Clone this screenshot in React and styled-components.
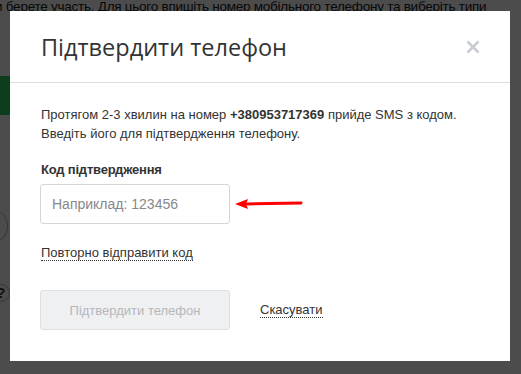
import React from "react";
import styled, { createGlobalStyle } from "styled-components";

const Global = createGlobalStyle`
  html, body { margin: 0; padding: 0; }
  body { width: 521px; height: 374px; overflow: hidden; font-family: "Liberation Sans", Arial, sans-serif; background: #fff; }
`;

const Page = styled.div`
  position: relative;
  width: 521px;
  height: 374px;
  overflow: hidden;
  background: #fff;
`;

const BgText = styled.div`
  font-size: 13.5px;
  line-height: 14px;
  letter-spacing: -0.25px;
  color: #1a1a1a;
  white-space: nowrap;
  margin-left: -5px;
`;

const BgGreen = styled.div`
  margin-top: 62px;
  width: 60px;
  height: 39px;
  background: #2fcb64;
`;

const BgCircle = styled.div`
  margin: 95px 0 0 -18px;
  width: 24px;
  height: 30px;
  border-radius: 50%;
  border: 1px solid #bbb;
`;

const BgHelp = styled.div`
  margin: 42px 0 0 -8px;
  width: 16px;
  height: 16px;
  border-radius: 50%;
  border: 1px solid #bbb;
  font-size: 14px;
  font-weight: bold;
  line-height: 16px;
  text-align: center;
  color: #333;
`;

const Overlay = styled.div`
  position: absolute;
  inset: 0;
  background: rgba(0, 0, 0, 0.7);
`;

const Modal = styled.div`
  position: absolute;
  left: 10px;
  top: 11px;
  width: 500px;
  height: 350px;
  background: #fff;
  display: flex;
  flex-direction: column;
`;

const Header = styled.div`
  height: 71px;
  border-bottom: 1px solid #dcdce2;
  display: flex;
  align-items: center;
  justify-content: space-between;
  padding: 0 30px 0 31px;
`;

const Title = styled.h2`
  margin: 0;
  font-family: "Open Sans", "Liberation Sans", sans-serif;
  font-weight: 400;
  font-size: 23.5px;
  color: #333;
`;

const Close = styled.button`
  border: 0;
  background: none;
  padding: 0;
  width: 14px;
  height: 14px;
  display: flex;
  cursor: pointer;
`;

const Body = styled.div`
  padding: 22px 30px 0 31px;
  color: #333;
  font-size: 13px;
`;

const Text = styled.p`
  margin: 0;
  line-height: 19px;
  color: #333;
`;

const Label = styled.div`
  margin-top: 18px;
  font-weight: bold;
  font-size: 13px;
  line-height: 18px;
  letter-spacing: -0.2px;
`;

const FieldRow = styled.div`
  margin-top: 5px;
  margin-left: -1px;
  display: flex;
  align-items: center;
  gap: 5px;
`;

const Input = styled.input`
  box-sizing: border-box;
  width: 190px;
  height: 40px;
  border: 1px solid #d4d4dc;
  border-radius: 3px;
  padding: 0 11px;
  font-family: "Liberation Sans", Arial, sans-serif;
  font-size: 14px;
  color: #333;
  outline: none;
  &::placeholder { color: #888; }
`;

const DotLink = styled.a`
  color: #333;
  text-decoration: none;
  border-bottom: 1px dotted #333;
  font-size: 13px;
  line-height: 15px;
  cursor: pointer;
`;

const ResendRow = styled.div`
  margin-top: 21px;
`;

const Actions = styled.div`
  margin-top: 30px;
  margin-left: -1px;
  display: flex;
  align-items: center;
  gap: 30px;
`;

const Button = styled.button`
  box-sizing: border-box;
  width: 190px;
  height: 40px;
  background: #eef0f2;
  border: 1px solid #dedfe3;
  border-radius: 3px;
  color: #b5b7bb;
  font-family: "Liberation Sans", Arial, sans-serif;
  font-size: 13px;
`;

export default function App() {
  return (
    <>
      <Global />
      <Page>
        <BgText>и берете участь. Для цього впишіть номер мобільного телефону та виберіть типи</BgText>
        <BgGreen />
        <BgCircle />
        <BgHelp>?</BgHelp>
        <Overlay />
        <Modal>
          <Header>
            <Title>Підтвердити телефон</Title>
            <Close aria-label="close">
              <svg width="14" height="14" viewBox="0 0 14 14">
                <path d="M1.5 1.5 L12.5 12.5 M12.5 1.5 L1.5 12.5" stroke="#c9ccd4" strokeWidth="2.6" />
              </svg>
            </Close>
          </Header>
          <Body>
            <Text>
              Протягом 2-3 хвилин на номер <b>+380953717369</b> прийде SMS з кодом.
              <br />
              Введіть його для підтвердження телефону.
            </Text>
            <Label>Код підтвердження</Label>
            <FieldRow>
              <Input placeholder="Наприклад: 123456" />
              <svg width="70" height="12" viewBox="0 0 70 12">
                <path d="M12 6 L66 5" stroke="#f00" strokeWidth="3" strokeLinecap="round" />
                <path d="M0 6 L13 1 L11 6 L13 11 Z" fill="#f00" />
              </svg>
            </FieldRow>
            <ResendRow>
              <DotLink>Повторно відправити код</DotLink>
            </ResendRow>
            <Actions>
              <Button disabled>Підтвердити телефон</Button>
              <DotLink>Скасувати</DotLink>
            </Actions>
          </Body>
        </Modal>
      </Page>
    </>
  );
}
